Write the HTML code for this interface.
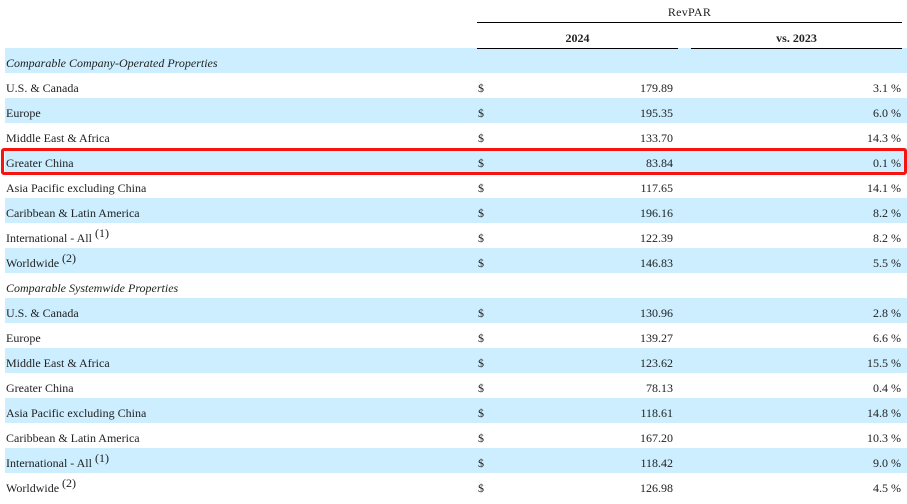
<!DOCTYPE html>
<html lang="en">
<head>
<meta charset="utf-8">
<title>RevPAR</title>
<style>
html,body{margin:0;padding:0;background:#fff;}
body{width:907px;height:499px;overflow:hidden;position:relative;font-family:"Liberation Serif",serif;font-size:12px;color:#222;}
.r{position:absolute;left:5px;width:902px;height:25px;line-height:31px;}
.b{background:#cceeff;}
.r span{position:absolute;white-space:nowrap;top:0;}
.l{left:1px;}
.d{left:473px;}
.v{right:234px;}
.p{right:6px;}
i{color:#222;}
sup{font-size:12px;line-height:0;position:relative;top:-1px;vertical-align:4px;}
.ln{position:absolute;height:1px;background:#000;}
.h{position:absolute;text-align:center;line-height:14px;white-space:nowrap;}
.box{position:absolute;left:1px;top:148px;width:899.5px;height:20.5px;border:3px solid #f5140f;border-radius:3px;}
</style>
</head>
<body>
<div class="h" style="left:477px;width:425px;top:5px;letter-spacing:.3px;">RevPAR</div>
<div class="ln" style="left:477px;width:425px;top:22px;"></div>
<div class="h" style="left:477px;width:201px;top:31px;font-weight:bold;">2024</div>
<div class="h" style="left:691px;width:211px;top:31px;font-weight:bold;">vs. 2023</div>
<div class="ln" style="left:477px;width:201px;top:48px;z-index:2;"></div>
<div class="ln" style="left:691px;width:211px;top:48px;z-index:2;"></div>

<div class="r b" style="top:48px"><span class="l"><i>Comparable Company-Operated Properties</i></span></div>
<div class="r" style="top:73px"><span class="l">U.S. &amp; Canada</span><span class="d">$</span><span class="v">179.89</span><span class="p">3.1 %</span></div>
<div class="r b" style="top:98px"><span class="l">Europe</span><span class="d">$</span><span class="v">195.35</span><span class="p">6.0 %</span></div>
<div class="r" style="top:123px"><span class="l">Middle East &amp; Africa</span><span class="d">$</span><span class="v">133.70</span><span class="p">14.3 %</span></div>
<div class="r b" style="top:148px"><span class="l">Greater China</span><span class="d">$</span><span class="v">83.84</span><span class="p">0.1 %</span></div>
<div class="r" style="top:173px"><span class="l">Asia Pacific excluding China</span><span class="d">$</span><span class="v">117.65</span><span class="p">14.1 %</span></div>
<div class="r b" style="top:198px"><span class="l">Caribbean &amp; Latin America</span><span class="d">$</span><span class="v">196.16</span><span class="p">8.2 %</span></div>
<div class="r" style="top:223px"><span class="l">International - All <sup>(1)</sup></span><span class="d">$</span><span class="v">122.39</span><span class="p">8.2 %</span></div>
<div class="r b" style="top:248px"><span class="l">Worldwide <sup>(2)</sup></span><span class="d">$</span><span class="v">146.83</span><span class="p">5.5 %</span></div>
<div class="r" style="top:273px"><span class="l"><i>Comparable Systemwide Properties</i></span></div>
<div class="r b" style="top:298px"><span class="l">U.S. &amp; Canada</span><span class="d">$</span><span class="v">130.96</span><span class="p">2.8 %</span></div>
<div class="r" style="top:323px"><span class="l">Europe</span><span class="d">$</span><span class="v">139.27</span><span class="p">6.6 %</span></div>
<div class="r b" style="top:348px"><span class="l">Middle East &amp; Africa</span><span class="d">$</span><span class="v">123.62</span><span class="p">15.5 %</span></div>
<div class="r" style="top:373px"><span class="l">Greater China</span><span class="d">$</span><span class="v">78.13</span><span class="p">0.4 %</span></div>
<div class="r b" style="top:398px"><span class="l">Asia Pacific excluding China</span><span class="d">$</span><span class="v">118.61</span><span class="p">14.8 %</span></div>
<div class="r" style="top:423px"><span class="l">Caribbean &amp; Latin America</span><span class="d">$</span><span class="v">167.20</span><span class="p">10.3 %</span></div>
<div class="r b" style="top:448px"><span class="l">International - All <sup>(1)</sup></span><span class="d">$</span><span class="v">118.42</span><span class="p">9.0 %</span></div>
<div class="r" style="top:473px"><span class="l">Worldwide <sup>(2)</sup></span><span class="d">$</span><span class="v">126.98</span><span class="p">4.5 %</span></div>

<div class="box"></div>
</body>
</html>
